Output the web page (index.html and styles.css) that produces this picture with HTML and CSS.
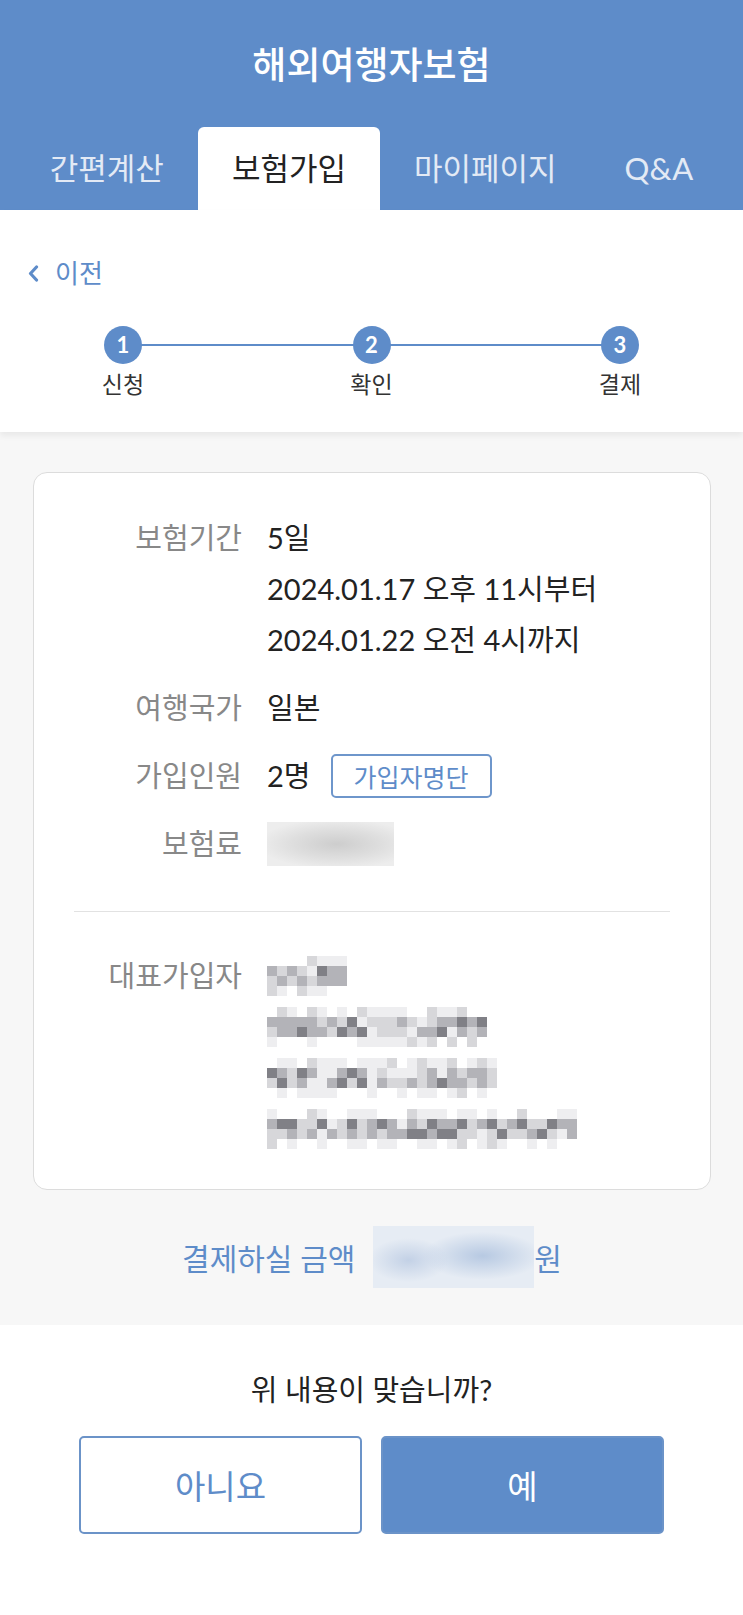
FILE: index.html
```html
<!DOCTYPE html>
<html lang="ko">
<head>
    <meta charset="UTF-8">
    <meta name="viewport" content="width=device-width, initial-scale=1.0">
    <title>해외여행자보험</title>
    <link rel="stylesheet" href="styles.css">
</head>
<body>
    <header class="top">
        <h1 class="title">해외여행자보험</h1>
        <nav class="tabs">
            <a class="tab">간편계산</a>
            <a class="tab active">보험가입</a>
            <a class="tab">마이페이지</a>
            <a class="tab">Q&amp;A</a>
        </nav>
    </header>

    <section class="steps-box">
        <a class="back">
            <svg width="11" height="17" viewBox="0 0 11 17"><polyline points="8.5,2 2.5,8.5 8.5,15" fill="none" stroke="#5e8cc9" stroke-width="3.2" stroke-linecap="round" stroke-linejoin="round"/></svg>
            <span>이전</span>
        </a>
        <div class="stepper">
            <div class="step"><span class="num">1</span><span class="step-label">신청</span></div>
            <div class="step"><span class="num">2</span><span class="step-label">확인</span></div>
            <div class="step"><span class="num">3</span><span class="step-label">결제</span></div>
        </div>
    </section>

    <main class="content">
        <div class="card">
            <div class="row">
                <div class="label">보험기간</div>
                <div class="value">
                    <span>5일</span>
                    <span>2024.01.17 오후 11시부터</span>
                    <span>2024.01.22 오전 4시까지</span>
                </div>
            </div>
            <div class="row">
                <div class="label">여행국가</div>
                <div class="value"><span>일본</span></div>
            </div>
            <div class="row">
                <div class="label">가입인원</div>
                <div class="value inline">
                    <span>2명</span>
                    <button class="list-btn">가입자명단</button>
                </div>
            </div>
            <div class="row">
                <div class="label">보험료</div>
                <div class="value"><span class="blur-fee"></span></div>
            </div>

            <hr class="divider">

            <div class="row">
                <div class="label">대표가입자</div>
                <div class="value">
                    <div class="mosaic-line"><div class="mosaic" data-cols="8"></div></div>
                    <div class="mosaic-line"><div class="mosaic" data-cols="22"></div></div>
                    <div class="mosaic-line"><div class="mosaic" data-cols="23"></div></div>
                    <div class="mosaic-line"><div class="mosaic" data-cols="31"></div></div>
                </div>
            </div>
        </div>

        <div class="total">
            <span>결제하실 금액</span>
            <span class="blur-total"></span>
            <span>원</span>
        </div>
    </main>

    <section class="confirm">
        <p class="question">위 내용이 맞습니까?</p>
        <div class="actions">
            <button class="btn btn-no">아니요</button>
            <button class="btn btn-yes">예</button>
        </div>
    </section>

    <script>
        // masked personal info, drawn as a pixel mosaic
        document.querySelectorAll('.mosaic').forEach(function (el, i) {
            var cols = parseInt(el.dataset.cols, 10);
            var seed = (i + 5) * 7919;
            function rand() {
                seed = (seed * 16807) % 2147483647;
                return seed / 2147483647;
            }
            el.style.width = (cols * 10) + 'px';
            for (var r = 0; r < 4; r++) {
                for (var c = 0; c < cols; c++) {
                    var v = rand();
                    var level;
                    if (r === 0 || r === 3) {
                        level = v < 0.45 ? 0 : v < 0.85 ? 1 : 2;
                    } else {
                        level = v < 0.12 ? 1 : v < 0.45 ? 2 : v < 0.82 ? 3 : 4;
                    }
                    var cell = document.createElement('span');
                    cell.className = 'px s' + level;
                    el.appendChild(cell);
                }
            }
        });
    </script>
</body>
</html>
```

FILE: styles.css
```css
body {
    margin: 0;
    background-color: #f7f7f7;
    font-family: "Lato", "Noto Sans CJK KR", sans-serif;
    color: #222222;
}
.top {
    background-color: #5e8cc9;
    padding-top: 45px;
    height: 165px;
}
.title {
    margin: 0 0 42px;
    font-size: 37px;
    font-weight: 500;
    line-height: 40px;
    color: #ffffff;
    text-align: center;
}
.tabs {
    display: flex;
    justify-content: center;
    height: 83px;
}
.tab {
    padding: 0 34px;
    font-size: 31px;
    line-height: 83px;
    color: #e3eaf5;
}
.tab.active {
    background-color: #ffffff;
    color: #222222;
    border-radius: 6px 6px 0 0;
}
.steps-box {
    background-color: #ffffff;
    padding: 48px 0 35px;
    box-shadow: 0 4px 6px rgba(0, 0, 0, 0.06);
    position: relative;
}
.back {
    display: flex;
    align-items: center;
    gap: 16px;
    margin-left: 28px;
    font-size: 26px;
    line-height: 30px;
    color: #5e8cc9;
}
.stepper {
    display: flex;
    justify-content: space-between;
    margin: 38px 104px 0;
    position: relative;
}
.stepper::before {
    content: "";
    position: absolute;
    left: 19px;
    right: 19px;
    top: 18px;
    height: 2px;
    background-color: #5e8cc9;
}
.step {
    width: 38px;
    display: flex;
    flex-direction: column;
    align-items: center;
    position: relative;
}
.num {
    width: 38px;
    height: 38px;
    border-radius: 50%;
    background-color: #5e8cc9;
    color: #ffffff;
    font-size: 22px;
    font-weight: 700;
    line-height: 38px;
    text-align: center;
}
.step-label {
    margin-top: 7px;
    font-size: 23px;
    line-height: 26px;
    color: #333333;
    white-space: nowrap;
}
.content {
    padding: 40px 32px 37px 33px;
}
.card {
    background-color: #ffffff;
    border: 1px solid #dcdcdc;
    border-radius: 14px;
    padding: 39px 40px 35px;
}
.row {
    display: flex;
    gap: 25px;
    margin-bottom: 17px;
    font-size: 29px;
    line-height: 51px;
}
.row:last-child {
    margin-bottom: 0;
}
.label {
    width: 168px;
    flex-shrink: 0;
    text-align: right;
    color: #888888;
}
.value {
    display: flex;
    flex-direction: column;
    align-items: flex-start;
}
.value.inline {
    flex-direction: row;
    align-items: center;
    gap: 20px;
}
.list-btn {
    height: 44px;
    padding: 0 21px;
    background-color: #ffffff;
    border: 2px solid #6e96cb;
    border-radius: 5px;
    font-family: inherit;
    font-size: 25px;
    color: #5e8cc9;
}
.blur-fee {
    display: block;
    width: 127px;
    height: 44px;
    margin-top: 4px;
    background: radial-gradient(ellipse at 55% 50%, #cdcdcd 0%, #dedede 45%, #ededed 80%);
}
.divider {
    border: none;
    border-top: 1px solid #e2e2e2;
    margin: 42px 0 38px;
}
.mosaic-line {
    height: 51px;
    display: flex;
    align-items: center;
}
.mosaic {
    display: flex;
    flex-wrap: wrap;
    height: 40px;
}
.px {
    width: 10px;
    height: 10px;
}
.s0 { background-color: transparent; }
.s1 { background-color: #eeeef0; }
.s2 { background-color: #d7d7da; }
.s3 { background-color: #b3b3b8; }
.s4 { background-color: #808086; }
.total {
    display: flex;
    justify-content: center;
    align-items: center;
    margin-top: 36px;
    font-size: 30px;
    color: #5e8cc9;
}
.blur-total {
    width: 161px;
    height: 62px;
    margin-left: 18px;
    background:
        radial-gradient(ellipse 40px 22px at 22% 55%, #c3d1e6, transparent),
        radial-gradient(ellipse 60px 24px at 68% 48%, #b7c9e2, transparent),
        #e6ecf4;
}
.confirm {
    background-color: #ffffff;
    padding: 47px 0 100px;
}
.question {
    margin: 0 0 28px;
    font-size: 29px;
    line-height: 36px;
    text-align: center;
    color: #222222;
}
.actions {
    display: flex;
    justify-content: center;
    gap: 19px;
}
.btn {
    width: 283px;
    height: 98px;
    border: 2px solid #6b93c8;
    border-radius: 5px;
    font-family: inherit;
    font-size: 33px;
    cursor: pointer;
}
.btn-no {
    background-color: #ffffff;
    color: #5e8cc9;
}
.btn-yes {
    background-color: #5e8cc9;
    color: #ffffff;
}
```
